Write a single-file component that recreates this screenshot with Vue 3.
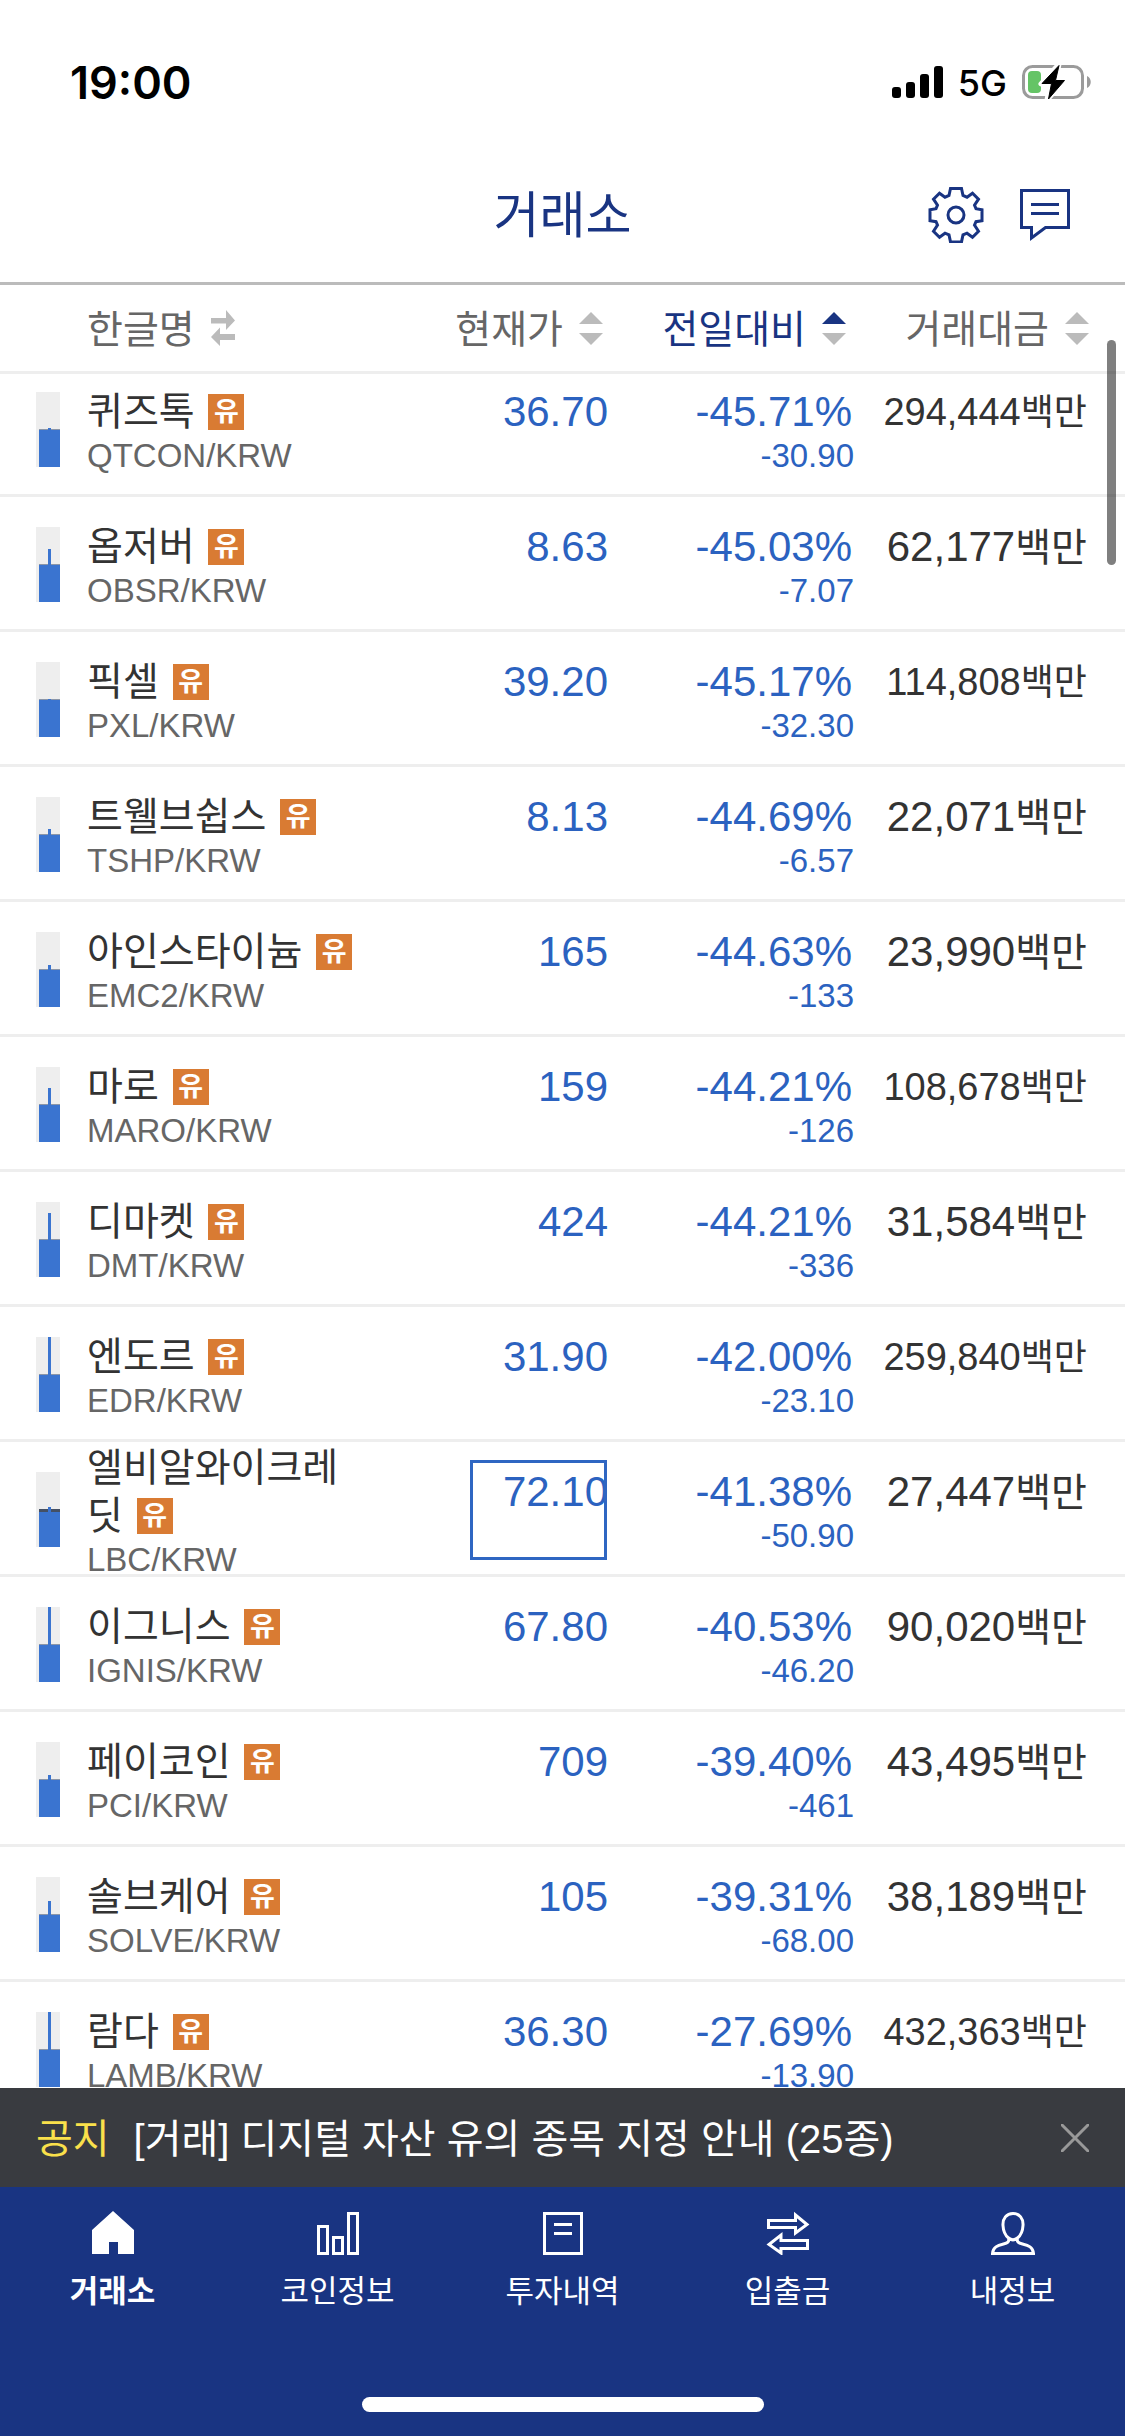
<script setup>
import { ref } from 'vue'

const coins = [
  { name: '퀴즈톡', pair: 'QTCON/KRW', price: '36.70', rate: '-45.71%', diff: '-30.90', volume: '294,444', wick: 36 },
  { name: '옵저버', pair: 'OBSR/KRW', price: '8.63', rate: '-45.03%', diff: '-7.07', volume: '62,177', wick: 22 },
  { name: '픽셀', pair: 'PXL/KRW', price: '39.20', rate: '-45.17%', diff: '-32.30', volume: '114,808', wick: 37 },
  { name: '트웰브쉽스', pair: 'TSHP/KRW', price: '8.13', rate: '-44.69%', diff: '-6.57', volume: '22,071', wick: 32 },
  { name: '아인스타이늄', pair: 'EMC2/KRW', price: '165', rate: '-44.63%', diff: '-133', volume: '23,990', wick: 33 },
  { name: '마로', pair: 'MARO/KRW', price: '159', rate: '-44.21%', diff: '-126', volume: '108,678', wick: 21 },
  { name: '디마켓', pair: 'DMT/KRW', price: '424', rate: '-44.21%', diff: '-336', volume: '31,584', wick: 11 },
  { name: '엔도르', pair: 'EDR/KRW', price: '31.90', rate: '-42.00%', diff: '-23.10', volume: '259,840', wick: 0 },
  { name: '엘비알와이크레딧', pair: 'LBC/KRW', price: '72.10', rate: '-41.38%', diff: '-50.90', volume: '27,447', wick: 35, flash: true },
  { name: '이그니스', pair: 'IGNIS/KRW', price: '67.80', rate: '-40.53%', diff: '-46.20', volume: '90,020', wick: 0 },
  { name: '페이코인', pair: 'PCI/KRW', price: '709', rate: '-39.40%', diff: '-461', volume: '43,495', wick: 33 },
  { name: '솔브케어', pair: 'SOLVE/KRW', price: '105', rate: '-39.31%', diff: '-68.00', volume: '38,189', wick: 24 },
  { name: '람다', pair: 'LAMB/KRW', price: '36.30', rate: '-27.69%', diff: '-13.90', volume: '432,363', wick: 0 },
]

const sorts = [
  { key: 'price', label: '현재가' },
  { key: 'rate', label: '전일대비' },
  { key: 'volume', label: '거래대금' },
]
const sortKey = ref('rate')

const tabs = [
  { key: 'home', label: '거래소' },
  { key: 'info', label: '코인정보' },
  { key: 'history', label: '투자내역' },
  { key: 'transfer', label: '입출금' },
  { key: 'me', label: '내정보' },
]
const activeTab = ref('home')
const noticeOpen = ref(true)
</script>

<template>
  <div class="app">
    <div class="status">
      <span class="clock">19:00</span>
      <div class="status-icons">
        <svg class="signal" viewBox="0 0 51 32" aria-hidden="true">
          <rect x="0" y="21" width="9" height="11" rx="3" />
          <rect x="14" y="16" width="9" height="16" rx="3" />
          <rect x="28" y="8" width="9" height="24" rx="3" />
          <rect x="42" y="0" width="9" height="32" rx="3" />
        </svg>
        <span class="network">5G</span>
        <svg class="battery" viewBox="0 0 70 38" aria-hidden="true">
          <rect x="1.5" y="3.5" width="59" height="31" rx="9" fill="none" stroke="#9b9b9b" stroke-width="3" />
          <path d="M65 13c5 2 5 10 0 12z" fill="#9b9b9b" />
          <rect x="6" y="8" width="13" height="22" rx="4" fill="#65c466" />
          <path d="M37 1L19 21h9L25 37 43 17h-9z" fill="#000" stroke="#fff" stroke-width="5" stroke-linejoin="round" />
          <path d="M37 2.500L20 20.500h9.500L26.500 36 42.500 17.500H33.500z" fill="#000" stroke="#000" stroke-linejoin="round" />
        </svg>
      </div>
    </div>

    <header class="titlebar">
      <h1>거래소</h1>
      <div class="actions">
        <button type="button" aria-label="설정">
          <svg class="gear" viewBox="-1 -1 56 56" aria-hidden="true">
            <path d="M21.500 0.500h11l1.500 7 4 1.700 5.500-4 6 6-4 6 1.500 3.500 6 1v11l-6 1-1.500 3.500 4 6-6 6-5.500-4-4 1.700-1.500 7h-11l-1.500-7-4-1.700-5.500 4-6-6 4-6-1.500-3.500-6-1v-11l6-1 1.500-3.500-4-6 6-6 5.500 4 4-1.700z" />
            <circle cx="27" cy="27" r="8" />
          </svg>
        </button>
        <button type="button" aria-label="채팅">
          <svg class="chat" viewBox="0 0 51 54" aria-hidden="true">
            <path d="M1.500 2.500h47v37H25.500L11.500 50V39.500h-10z" />
            <path d="M11 16.500h28M11 25.500h28" />
          </svg>
        </button>
      </div>
    </header>

    <table class="market">
      <thead>
        <tr class="cols">
          <th class="name-head" scope="col">
            <button type="button">
              <span>한글명</span>
              <svg class="swap" viewBox="0 0 24 36" aria-hidden="true">
                <path d="M0 8h15V0l9 10.500L15 20v-6.500H0zM24 30H9v6L0 27l9-9.500V24h15z" />
              </svg>
            </button>
          </th>
          <th v-for="s in sorts" :key="s.key" scope="col" :class="[s.key + '-head', { active: sortKey === s.key }]">
            <button type="button" @click="sortKey = s.key">
              <span>{{ s.label }}</span>
              <svg class="sort" viewBox="0 0 24 33" aria-hidden="true">
                <path class="up" d="M0 12L12 0l12 12z" />
                <path d="M0 21h24L12 33z" />
              </svg>
            </button>
          </th>
        </tr>
      </thead>
      <tbody>
        <tr v-for="c in coins" :key="c.pair" class="cols coin">
          <td class="name-cell">
            <svg class="candle" viewBox="0 0 24 75" aria-hidden="true">
              <rect width="24" height="75" fill="#eee" />
              <rect x="3" y="38" width="21" height="37" fill="#3a74d0" />
              <rect v-if="c.flash" x="3" y="37" width="21" height="3" fill="#445064" />
              <rect v-else x="3" y="37" width="21" height="1" fill="#8b96a8" />
              <rect x="12" :y="c.wick" width="3" :height="75 - c.wick" fill="#3a74d0" />
            </svg>
            <div class="names">
              <div class="name">{{ c.name }} <span class="badge">유</span></div>
              <div class="pair">{{ c.pair }}</div>
            </div>
          </td>
          <td class="price" :class="{ flash: c.flash }">{{ c.price }}</td>
          <td class="change">
            <div class="rate">{{ c.rate }}</div>
            <div class="diff">{{ c.diff }}</div>
          </td>
          <td class="volume" :class="{ long: c.volume.length > 6 }">{{ c.volume }}<span class="unit">백만</span></td>
        </tr>
      </tbody>
    </table>
    <div class="scrollbar"></div>

    <div v-if="noticeOpen" class="notice">
      <strong>공지</strong>
      <a href="#">[거래] 디지털 자산 유의 종목 지정 안내 (25종)</a>
      <button type="button" aria-label="닫기" @click="noticeOpen = false">
        <svg viewBox="0 0 28 28" aria-hidden="true"><path d="M0 0l28 28M28 0L0 28" /></svg>
      </button>
    </div>

    <nav class="tabs">
      <div class="tab-row">
        <button v-for="t in tabs" :key="t.key" type="button" :class="{ current: activeTab === t.key }" @click="activeTab = t.key">
          <svg v-if="t.key === 'home'" viewBox="0 0 44 44" aria-hidden="true">
            <path class="solid" d="M22 0l21 19v24H27V31h-9v12H1V19z" />
          </svg>
          <svg v-else-if="t.key === 'info'" viewBox="0 0 44 44" aria-hidden="true">
            <path d="M2.500 15.500h9v27h-9zM17.500 26.500h9v16h-9zM32.500 2.500h9v40h-9z" />
          </svg>
          <svg v-else-if="t.key === 'history'" viewBox="0 0 44 44" aria-hidden="true">
            <path d="M3.500 2.500h37v40h-37zM13 13.500h18M13 22.500h18" />
          </svg>
          <svg v-else-if="t.key === 'transfer'" viewBox="0 0 44 44" aria-hidden="true">
            <path d="M2.500 9.500h27V4L41 13.500 29.500 22v-5.500h-27zM41.500 29.500H15V24L3 33.500 15 42v-4.500h26.500z" />
          </svg>
          <svg v-else viewBox="0 0 44 44" aria-hidden="true">
            <path d="M22 2.500c-6.500 0-10.500 5-10 12 .3 6 3 10.500 5.500 12.500 1 4-1 5-5 6-6 1.500-10.500 3-11 9.500h41c-.5-6.500-5-8-11-9.500-4-1-6-2-5-6 2.500-2 5.200-6.500 5.500-12.500.5-7-3.500-12-10-12zM17.500 27c3 2.500 6 2.500 9 0" />
          </svg>
          {{ t.label }}
        </button>
      </div>
      <div class="home-indicator"></div>
    </nav>
  </div>
</template>

<style>
body {
  margin: 0;
}
</style>

<style scoped>
.app {
  position: relative;
  display: flex;
  flex-direction: column;
  height: 100vh;
  overflow: hidden;
  background: #fff;
  color: #333;
  font-family: "Liberation Sans", "Noto Sans CJK KR", sans-serif;
  font-size: 39px;
}

button {
  margin: 0;
  padding: 0;
  border: 0;
  background: none;
  color: inherit;
  font: inherit;
  cursor: pointer;
}

svg {
  display: block;
  flex: none;
}

.status {
  display: flex;
  align-items: center;
  justify-content: space-between;
  height: 132px;
  padding: 32px 33px 0 70px;
  box-sizing: border-box;
  color: #000;
  font-family: Inter, sans-serif;
}

.clock {
  font-size: 45px;
  font-weight: 600;
}

.status-icons {
  display: flex;
  align-items: center;
  gap: 15px;
}

.signal {
  width: 51px;
  height: 32px;
}

.network {
  padding-top: 2px;
  font-size: 36px;
  font-weight: 500;
}

.battery {
  width: 70px;
  height: 38px;
}

.titlebar {
  display: grid;
  grid-template-columns: 1fr auto 1fr;
  align-items: center;
  height: 153px;
  padding: 8px 54px 0;
  box-sizing: border-box;
  border-bottom: 3px solid #bbb;
  color: #193482;
}

h1 {
  grid-column: 2;
  margin: 0;
  font-size: 50px;
  font-weight: 400;
}

.actions {
  display: flex;
  align-items: center;
  justify-content: flex-end;
  gap: 36px;
  padding-top: 8px;
}

.gear {
  width: 56px;
  height: 56px;
}

.chat {
  width: 51px;
  height: 54px;
}

.gear,
.chat {
  fill: none;
  stroke: #193482;
  stroke-width: 3;
}

.market {
  display: flex;
  flex: 1;
  flex-direction: column;
  min-height: 0;
}

thead,
tbody {
  display: block;
}

tbody {
  flex: 1;
  min-height: 0;
  overflow: hidden;
}

.cols {
  display: grid;
  grid-template-columns: 390fr 182fr 246fr 235fr;
  padding: 0 36px;
  box-sizing: border-box;
  border-bottom: 3px solid #eee;
}

thead .cols {
  height: 89px;
  align-items: center;
  color: #666;
}

th {
  padding: 0;
  font-weight: 400;
  text-align: right;
}

th button {
  display: inline-flex;
  align-items: center;
  gap: 16px;
  white-space: nowrap;
}

th span {
  padding-bottom: 4px;
}

.name-head {
  padding-left: 51px;
  text-align: left;
}

.price-head {
  padding-right: 5px;
}

.rate-head {
  padding-right: 8px;
}

.swap {
  width: 24px;
  height: 36px;
  fill: #bbb;
}

.sort {
  width: 24px;
  height: 33px;
  fill: #bbb;
}

.active {
  color: #193482;
}

.active .up {
  fill: #193482;
}

.coin {
  height: 135px;
}

.coin:first-child {
  margin-top: -12px;
}

td {
  min-width: 0;
  padding: 0;
}

.name-cell {
  display: flex;
  align-items: center;
  height: 140px;
  gap: 27px;
}

.candle {
  width: 24px;
  height: 75px;
  margin-bottom: 5px;
}

.names {
  width: 274px;
}

.name {
  line-height: 48px;
  word-break: break-all;
}

.badge {
  display: inline-block;
  width: 36px;
  height: 36px;
  margin: 6px 0 0 3px;
  background: #d97b33;
  color: #fff;
  font-size: 27px;
  font-weight: 700;
  line-height: 36px;
  text-align: center;
  vertical-align: top;
}

.pair {
  color: #666;
  font-size: 33px;
  line-height: 40px;
}

.price,
.change,
.volume {
  padding-top: 26px;
  font-size: 42px;
  line-height: 48px;
  text-align: right;
  white-space: nowrap;
}

.price,
.change {
  color: #2b62c0;
}

.price {
  position: relative;
}

.flash::after {
  content: "";
  position: absolute;
  top: 18px;
  right: 1px;
  width: 137px;
  height: 100px;
  box-sizing: border-box;
  border: 3px solid #2f66c2;
}

.rate,
.volume {
  padding-right: 2px;
}

.diff {
  font-size: 33px;
  line-height: 40px;
}

.unit {
  font-size: 39px;
}

.long {
  font-size: 38px;
}

.long .unit {
  font-size: 36px;
}

.scrollbar {
  position: absolute;
  top: 340px;
  right: 9px;
  width: 9px;
  height: 225px;
  border-radius: 5px;
  background: rgba(0, 0, 0, 0.5);
}

.notice {
  display: flex;
  align-items: center;
  height: 99px;
  padding: 0 36px;
  background: #393b40;
  font-size: 40px;
}

.notice strong {
  margin-right: 24px;
  padding-bottom: 4px;
  color: #fae04b;
  font-weight: 400;
}

.notice a {
  flex: 1;
  padding-bottom: 4px;
  color: #fff;
  text-decoration: none;
}

.notice svg {
  width: 28px;
  height: 28px;
  fill: none;
  stroke: #999;
  stroke-width: 3;
}

.tabs {
  display: flex;
  flex-direction: column;
  align-items: center;
  justify-content: space-between;
  height: 249px;
  padding: 24px 0;
  box-sizing: border-box;
  background: #193482;
  color: #fff;
}

.tab-row {
  display: grid;
  grid-template-columns: repeat(5, 1fr);
  width: 100%;
}

.tab-row button {
  display: flex;
  flex-direction: column;
  align-items: center;
  gap: 11px;
  font-size: 31px;
}

.tab-row svg {
  width: 44px;
  height: 44px;
  fill: none;
  stroke: #fff;
  stroke-width: 3;
}

.tab-row .solid {
  fill: #fff;
  stroke: none;
}

.current {
  font-weight: 700;
}

.home-indicator {
  width: 402px;
  height: 15px;
  border-radius: 8px;
  background: #fff;
}
</style>
